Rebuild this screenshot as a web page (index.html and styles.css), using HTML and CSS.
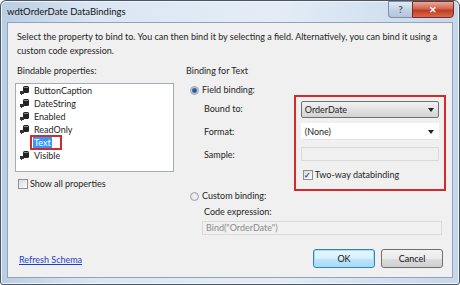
FILE: index.html
```html
<!DOCTYPE html>
<html lang="en">
<head>
    <meta charset="UTF-8">
    <title>wdtOrderDate DataBindings</title>
    <link rel="stylesheet" href="styles.css">
</head>
<body>
    <div class="window">
        <div class="titlebar">
            <span class="title">wdtOrderDate DataBindings</span>
            <div class="caption-buttons">
                <span class="btn-help">?</span>
                <span class="btn-close">&#x2715;</span>
            </div>
        </div>
        <div class="client">
            <p class="intro">Select the property to bind to. You can then bind it by selecting a field. Alternatively, you can bind it using a<br>custom code expression.</p>
            <div class="main">
                <div class="left">
                    <div class="label">Bindable properties:</div>
                    <ul class="props">
                        <li><svg class="ico" width="9" height="9" viewBox="0 0 9 9"><rect x="3" y="0" width="6" height="7" rx="1.5" fill="#222"/><rect x="4" y="1" width="4" height="1" fill="#888"/><rect x="0" y="5" width="4" height="3" fill="#333"/><rect x="1" y="8" width="1" height="1" fill="#333"/></svg>ButtonCaption</li>
                        <li><svg class="ico" width="9" height="9" viewBox="0 0 9 9"><rect x="3" y="0" width="6" height="7" rx="1.5" fill="#222"/><rect x="4" y="1" width="4" height="1" fill="#888"/><rect x="0" y="5" width="4" height="3" fill="#333"/><rect x="1" y="8" width="1" height="1" fill="#333"/></svg>DateString</li>
                        <li><svg class="ico" width="9" height="9" viewBox="0 0 9 9"><rect x="3" y="0" width="6" height="7" rx="1.5" fill="#222"/><rect x="4" y="1" width="4" height="1" fill="#888"/><rect x="0" y="5" width="4" height="3" fill="#333"/><rect x="1" y="8" width="1" height="1" fill="#333"/></svg>Enabled</li>
                        <li><svg class="ico" width="9" height="9" viewBox="0 0 9 9"><rect x="3" y="0" width="6" height="7" rx="1.5" fill="#222"/><rect x="4" y="1" width="4" height="1" fill="#888"/><rect x="0" y="5" width="4" height="3" fill="#333"/><rect x="1" y="8" width="1" height="1" fill="#333"/></svg>ReadOnly</li>
                        <li class="selected"><span class="mark"><span class="sel-text">Text</span></span></li>
                        <li><svg class="ico" width="9" height="9" viewBox="0 0 9 9"><rect x="3" y="0" width="6" height="7" rx="1.5" fill="#222"/><rect x="4" y="1" width="4" height="1" fill="#888"/><rect x="0" y="5" width="4" height="3" fill="#333"/><rect x="1" y="8" width="1" height="1" fill="#333"/></svg>Visible</li>
                    </ul>
                    <label class="check show-all"><span class="box"></span>Show all properties</label>
                </div>
                <div class="right">
                    <div class="label">Binding for Text</div>
                    <div class="radio-row"><span class="radio on"></span>Field binding:</div>
                    <div class="field-area">
                        <div class="field-labels">
                            <span>Bound to:</span>
                            <span>Format:</span>
                            <span>Sample:</span>
                        </div>
                        <div class="field-box">
                            <div class="combo gray">OrderDate<span class="arrow"></span></div>
                            <div class="combo white">(None)<span class="arrow"></span></div>
                            <div class="textbox sample"></div>
                            <label class="check two-way"><span class="box checked">&#x2713;</span>Two-way databinding</label>
                        </div>
                    </div>
                    <div class="radio-row custom"><span class="radio"></span>Custom binding:</div>
                    <div class="code-label">Code expression:</div>
                    <div class="textbox code">Bind("OrderDate")</div>
                </div>
            </div>
            <div class="footer">
                <a class="link" href="#">Refresh Schema</a>
                <div class="buttons">
                    <button class="ok">OK</button>
                    <button>Cancel</button>
                </div>
            </div>
        </div>
    </div>
</body>
</html>
```

FILE: styles.css
```css
body, html {
    margin: 0;
    padding: 0;
    width: 460px;
    height: 285px;
    overflow: hidden;
    background-color: #fff;
    font-family: 'Lato', 'Noto Sans', sans-serif;
    font-size: 9px;
    color: #1e1e1e;
}

.window {
    width: 460px;
    height: 285px;
    box-sizing: border-box;
    border: 1px solid #4d5560;
    border-radius: 6px 6px 3px 3px;
    background: linear-gradient(to right, #b9cde3 0%, #dbe6f3 20%, #e4edf7 60%, #c5d7ea 100%);
    display: flex;
    flex-direction: column;
    box-shadow: inset 0 0 0 1px #eef4fb;
}

.titlebar {
    height: 21px;
    display: flex;
    justify-content: space-between;
    align-items: flex-start;
    padding-left: 6px;
}

.title {
    margin-top: 5px;
    font-size: 9.5px;
    color: #111;
}

.caption-buttons {
    display: flex;
    margin-right: 5px;
}

.btn-help {
    width: 24px;
    height: 17px;
    box-sizing: border-box;
    border: 1px solid #7d8ea5;
    border-right: none;
    border-radius: 0 0 0 4px;
    background: linear-gradient(#e2ebf5, #c3d2e4 50%, #b3c5db);
    color: #4a5a70;
    font-weight: bold;
    font-size: 10px;
    text-align: center;
    line-height: 15px;
}

.btn-close {
    width: 42px;
    height: 17px;
    box-sizing: border-box;
    border: 1px solid #7a2b26;
    border-radius: 0 0 4px 0;
    background: linear-gradient(#e9a99c, #d0644f 45%, #c23a22 55%, #d66b4c);
    color: #fff;
    font-weight: bold;
    font-size: 9px;
    text-align: center;
    line-height: 15px;
}

.client {
    margin: 0 6px;
    height: 256px;
    box-sizing: border-box;
    background-color: #f0f0f0;
    border: 1px solid #8fa3bb;
    padding: 0 9px;
    display: flex;
    flex-direction: column;
}

.intro {
    margin: 7px 0 0 0;
    line-height: 14px;
    white-space: nowrap;
}

.main {
    display: flex;
    margin-top: 6px;
}

.label {
    line-height: 14px;
}

.left {
    width: 159px;
    flex-shrink: 0;
    margin-left: -2px;
}

.left .label {
    margin-left: 2px;
}

.props {
    list-style: none;
    margin: 5px 0 0 0;
    padding: 0 0 0 4px;
    height: 87px;
    background-color: #fff;
    border: 1px solid #a5acb5;
}

.props li {
    height: 13px;
    line-height: 13px;
    display: flex;
    align-items: center;
}

.ico {
    margin-right: 5px;
    flex-shrink: 0;
}

.mark {
    display: flex;
    align-items: center;
    height: 11px;
    margin-left: 10px;
    padding: 0 8px 0 1px;
    border: 2px solid #d42a2a;
}

.sel-text {
    background-color: #3399ff;
    color: #fff;
    padding: 0 1px;
    line-height: 11px;
}

.check {
    display: flex;
    align-items: center;
    line-height: 14px;
}

.box {
    width: 8px;
    height: 8px;
    border: 1px solid #8e8f8f;
    background: linear-gradient(135deg, #dcdcdc, #fafafa);
    margin-right: 2px;
    font-size: 8px;
    line-height: 8px;
    text-align: center;
    color: #2a4f8c;
    font-weight: bold;
}

.show-all {
    margin-top: 5px;
    margin-left: 3px;
}

.right {
    margin-left: 12px;
    width: 260px;
    flex-shrink: 0;
}

.radio-row {
    display: flex;
    align-items: center;
    margin-top: 5px;
    margin-left: 4px;
    line-height: 14px;
}

.radio {
    width: 7px;
    height: 7px;
    border-radius: 50%;
    border: 1px solid #9aa3ac;
    background: radial-gradient(#f4f4f4, #d8dbde);
    margin-right: 3px;
}

.radio.on {
    background: radial-gradient(#2b5a8a 30%, #7fa8cf 55%, #e6eef6 70%);
}

.field-area {
    display: flex;
    margin-top: -2px;
}

.field-labels {
    width: 91px;
    margin-left: 18px;
    padding-top: 7px;
    display: flex;
    flex-direction: column;
    gap: 9px;
    line-height: 14px;
}

.field-box {
    width: 140px;
    border: 2px solid #d42a2a;
    padding: 4px 5px 7px 5px;
    display: flex;
    flex-direction: column;
}

.combo {
    height: 17px;
    box-sizing: border-box;
    line-height: 15px;
    padding-left: 3px;
    position: relative;
    border: 1px solid #a2a9b1;
}

.combo.gray {
    background: linear-gradient(#f2f2f2, #e2e2e2 50%, #d3d3d3);
    border-color: #707070;
    border-radius: 2px;
}

.combo.white {
    background-color: #fff;
    border-color: #fff;
    border-bottom-color: #e3e3e3;
    margin-top: 5px;
}

.arrow {
    position: absolute;
    right: 4px;
    top: 6px;
    border-left: 3px solid transparent;
    border-right: 3px solid transparent;
    border-top: 4px solid #222;
}

.textbox {
    height: 14px;
    box-sizing: border-box;
    border: 1px solid #dadada;
    background-color: #f0f0f0;
}

.textbox.sample {
    margin-top: 7px;
}

.two-way {
    margin-top: 7px;
    margin-left: 2px;
}

.custom {
    margin-top: -2px;
}

.code-label {
    margin-left: 18px;
    margin-top: 2px;
    line-height: 14px;
}

.textbox.code {
    margin-left: 16px;
    margin-top: 2px;
    width: 240px;
    color: #8a8a8a;
    line-height: 12px;
    padding-left: 3px;
}

.footer {
    margin-top: auto;
    margin-bottom: 9px;
    display: flex;
    justify-content: space-between;
    align-items: center;
}

.link {
    color: #1a3fc8;
    margin-left: 2px;
    margin-top: 2px;
}

.buttons {
    display: flex;
    gap: 6px;
}

button {
    width: 62px;
    height: 19px;
    font-family: inherit;
    font-size: 9px;
    border: 1px solid #707070;
    border-radius: 3px;
    background: linear-gradient(#f2f2f2, #ebebeb 50%, #dddddd 51%, #cfcfcf);
    color: #111;
    padding: 0;
    line-height: 16px;
}

button.ok {
    border-color: #3c7fb1;
    box-shadow: inset 0 0 0 1px #9fe0fa;
    background: linear-gradient(#eaf6fd, #d9f0fc 50%, #bee6fd 51%, #a7d9f5);
}
```
